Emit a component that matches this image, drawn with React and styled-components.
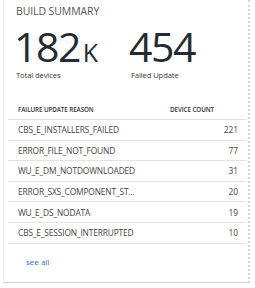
import React from "react";
import styled, { createGlobalStyle } from "styled-components";

const Global = createGlobalStyle`
  html, body { margin: 0; padding: 0; background: #ffffff; }
  body { font-family: "Open Sans", "Noto Sans", sans-serif; }
`;

const Card = styled.div`
  box-sizing: border-box;
  margin-left: 3px;
  width: 247px;
  height: 283px;
  background: #fff;
  border-left: 1px solid #ececec;
  border-right: 2px dotted #d6d6d6;
  border-bottom: 1px solid #d0d0d0;
  padding: 4px 4px 0 4px;
  display: flex;
  flex-direction: column;
`;

const Title = styled.div`
  font-size: 10.5px;
  color: #555;
  letter-spacing: -0.1px;
  padding-left: 8px;
  line-height: 14px;
`;

const Stats = styled.div`
  display: flex;
  padding-left: 8px;
  margin-top: 8px;
`;

const Stat = styled.div`
  width: ${(p) => p.$w}px;
  display: flex;
  flex-direction: column;
`;

const Big = styled.div`
  font-size: 41px;
  line-height: 40px;
  height: 40px;
  color: #252b33;
  letter-spacing: -1.5px;
  margin-left: -2px;
`;

const Unit = styled.span`
  font-size: 25px;
  letter-spacing: 0;
  margin-left: 3px;
`;

const Caption = styled.div`
  font-size: 7.6px;
  line-height: 10px;
  color: #333;
  margin-top: 4px;
  letter-spacing: -0.1px;
`;

const Table = styled.div`
  margin-top: 20px;
  width: 238px;
  display: flex;
  flex-direction: column;
`;

const Row = styled.div`
  display: flex;
  justify-content: space-between;
  align-items: center;
  box-sizing: border-box;
  height: ${(p) => (p.$head ? 20 : 20.6)}px;
  border-bottom: 1px solid #e2e2e2;
  padding: 0 8px 0 10px;
`;

const HeadCell = styled.span`
  font-size: 6.3px;
  font-weight: 600;
  color: #333;
  letter-spacing: -0.1px;
  ${(p) => p.$right && "margin-right: 24px;"}
`;

const Cell = styled.span`
  font-size: 8.4px;
  color: #444;
  letter-spacing: -0.15px;
`;

const Num = styled.span`
  font-size: 8.4px;
  color: #444;
`;

const SeeAll = styled.a`
  font-size: 8px;
  line-height: 11px;
  color: #2f6fc9;
  margin: 12px 0 0 18px;
  text-decoration: none;
  align-self: flex-start;
`;

const rows = [
  ["CBS_E_INSTALLERS_FAILED", 221],
  ["ERROR_FILE_NOT_FOUND", 77],
  ["WU_E_DM_NOTDOWNLOADED", 31],
  ["ERROR_SXS_COMPONENT_ST...", 20],
  ["WU_E_DS_NODATA", 19],
  ["CBS_E_SESSION_INTERRUPTED", 10],
];

export default function App() {
  return (
    <>
      <Global />
      <Card>
        <Title>BUILD SUMMARY</Title>
        <Stats>
          <Stat $w={115}>
            <Big>
              182<Unit>K</Unit>
            </Big>
            <Caption>Total devices</Caption>
          </Stat>
          <Stat $w={100}>
            <Big>454</Big>
            <Caption>Failed Update</Caption>
          </Stat>
        </Stats>
        <Table>
          <Row $head>
            <HeadCell>FAILURE UPDATE REASON</HeadCell>
            <HeadCell $right>DEVICE COUNT</HeadCell>
          </Row>
          {rows.map(([name, n]) => (
            <Row key={name}>
              <Cell>{name}</Cell>
              <Num>{n}</Num>
            </Row>
          ))}
        </Table>
        <SeeAll href="#">see all</SeeAll>
      </Card>
    </>
  );
}
